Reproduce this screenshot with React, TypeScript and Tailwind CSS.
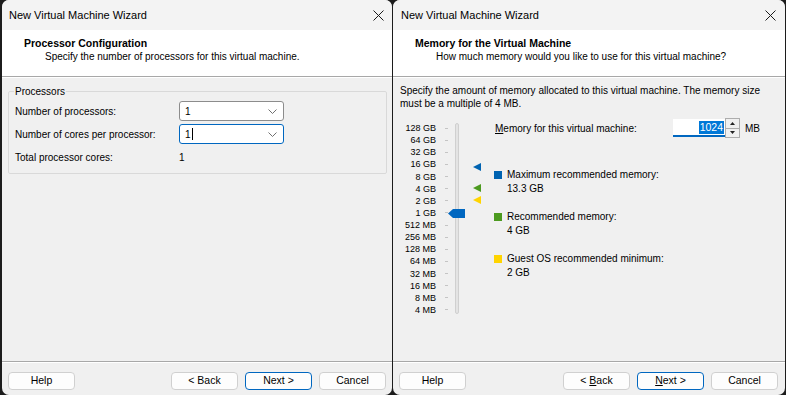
import React from "react";

const FONT = "font-['Liberation_Sans','Arial',sans-serif]";

function CloseX() {
  return (
    <svg width="11" height="11" viewBox="0 0 11 11">
      <path d="M0.5 0.5 L10.5 10.5 M10.5 0.5 L0.5 10.5" stroke="#1a1a1a" strokeWidth="1" fill="none" />
    </svg>
  );
}

function Chevron() {
  return (
    <svg width="9" height="5" viewBox="0 0 9 5">
      <path d="M0.5 0.5 L4.5 4.5 L8.5 0.5" stroke="#707070" strokeWidth="1" fill="none" />
    </svg>
  );
}

function Btn({ children, primary }: { children: React.ReactNode; primary?: boolean }) {
  return (
    <div
      className={
        "w-[67px] h-[18px] flex items-center justify-center rounded-[4px] bg-[#fdfdfd] text-[10.5px] text-black border " +
        (primary ? "border-[#0067c0]" : "border-[#d0d0d0]")
      }
    >
      {children}
    </div>
  );
}

function Separator() {
  return <div className="h-[2px] border-t border-[#a8a8a8] border-b border-b-white" />;
}

function Window({
  width,
  heading,
  sub,
  children,
  underline,
  titlePad,
  rightPad,
  closePad,
}: {
  width: string;
  heading: string;
  sub: string;
  children: React.ReactNode;
  underline?: boolean;
  titlePad: string;
  rightPad: string;
  closePad: string;
}) {
  return (
    <div className={"h-[395px] flex flex-col rounded-[7px] overflow-hidden bg-[#f0f0f0] " + width}>
      <div className={"h-[30px] shrink-0 flex items-center justify-between bg-[#f3f3f3] " + titlePad + " " + closePad}>
        <span className="text-[11px] text-black">New Virtual Machine Wizard</span>
        <CloseX />
      </div>
      <div className="h-[46px] shrink-0 bg-white pt-[6px] pl-[22px] leading-[14px]">
        <div className="text-[10.5px] font-bold text-black">{heading}</div>
        <div className="text-[10px] text-black pl-[21px]">{sub}</div>
      </div>
      <Separator />
      <div className="flex-1 flex flex-col">{children}</div>
      <Separator />
      <div className={"h-[32px] shrink-0 pt-[9px] pl-[6px] flex justify-between " + rightPad}>
        <Btn>Help</Btn>
        <div className="flex gap-[7px]">
          <Btn>
            {underline ? (
              <span>
                &lt; <span className="underline">B</span>ack
              </span>
            ) : (
              "< Back"
            )}
          </Btn>
          <Btn primary>
            {underline ? (
              <span>
                <span className="underline">N</span>ext &gt;
              </span>
            ) : (
              "Next >"
            )}
          </Btn>
          <Btn>Cancel</Btn>
        </div>
      </div>
    </div>
  );
}

function Combo({ focused }: { focused?: boolean }) {
  return (
    <div
      className={
        "w-[105px] h-[20px] bg-white rounded-[3px] border flex items-center justify-between pl-[5px] pr-[6px] " +
        (focused ? "border-[#0067c0]" : "border-[#8c8c8c]")
      }
    >
      <span className="flex items-center text-[10px] text-black">
        1{focused && <span className="ml-[1px] inline-block w-[1px] h-[12px] bg-black" />}
      </span>
      <Chevron />
    </div>
  );
}

const SIZES = [
  "128 GB",
  "64 GB",
  "32 GB",
  "16 GB",
  "8 GB",
  "4 GB",
  "2 GB",
  "1 GB",
  "512 MB",
  "256 MB",
  "128 MB",
  "64 MB",
  "32 MB",
  "16 MB",
  "8 MB",
  "4 MB",
];

function Marker({ color, top }: { color: string; top: string }) {
  return (
    <svg width="8" height="8" viewBox="0 0 8 8" className={"absolute left-[25px] " + top}>
      <path d="M0 4 L8 0 L8 8 Z" fill={color} />
    </svg>
  );
}

function Legend({ color, label, value, mt }: { color: string; label: string; value: string; mt: string }) {
  return (
    <div className={"flex items-start " + mt}>
      <div className={"w-[8px] h-[8px] mt-[3px] shrink-0 " + color} />
      <div className="ml-[5px] text-[10px] leading-[14px] text-black">
        <div>{label}</div>
        <div>{value}</div>
      </div>
    </div>
  );
}

export default function App() {
  return (
    <div className={"w-[786px] h-[395px] bg-[#1c1c1c] flex pl-[2px] gap-[1px] overflow-hidden " + FONT}>
      <Window
        width="w-[390px]"
        heading="Processor Configuration"
        sub="Specify the number of processors for this virtual machine."
        titlePad="pl-[7px]"
        closePad="pr-[8px]"
        rightPad="pr-[6px]"
      >
        <fieldset className="mt-[7px] ml-[6px] mr-[5px] border border-[#d9d9d9] rounded-[2px] px-[6px] pt-[3px] pb-[9px]">
          <legend className="text-[10px] leading-[13px] text-black px-[1px] -ml-[1px]">Processors</legend>
          <div className="flex items-center h-[20px]">
            <span className="w-[164px] text-[10px] text-black">Number of processors:</span>
            <Combo />
          </div>
          <div className="flex items-center h-[20px] mt-[3px]">
            <span className="w-[164px] text-[10px] text-black">Number of cores per processor:</span>
            <Combo focused />
          </div>
          <div className="flex items-center h-[14px] mt-[6px]">
            <span className="w-[164px] text-[10px] text-black">Total processor cores:</span>
            <span className="text-[10px] text-black">1</span>
          </div>
        </fieldset>
      </Window>
      <Window
        width="w-[392px]"
        heading="Memory for the Virtual Machine"
        sub="How much memory would you like to use for this virtual machine?"
        underline
        titlePad="pl-[8px]"
        closePad="pr-[9px]"
        rightPad="pr-[7px]"
      >
        <div className="pl-[7px] pt-[6px]">
          <div className="text-[10px] leading-[13px] text-black whitespace-nowrap">
            Specify the amount of memory allocated to this virtual machine. The memory size
            <br />
            must be a multiple of 4 MB.
          </div>
          <div className="flex items-start mt-[8px]">
            <div className="pt-[4px] flex flex-col">
              {SIZES.map((s) => (
                <div key={s} className="flex items-center h-[12.13px]">
                  <span className="w-[36px] text-right text-[9px] leading-[12px] text-black whitespace-nowrap">{s}</span>
                  <span className="ml-[9px] w-[3px] h-[1px] bg-[#c4c4c4]" />
                </div>
              ))}
            </div>
            <div className="relative w-[34px] h-[191px] mt-[5px]">
              <div className="absolute left-[7px] top-0 bottom-0 w-[4px] rounded-[2px] bg-[#e4e4e4] border border-[#d0d0d0]" />
              <svg width="17" height="9" viewBox="0 0 17 9" className="absolute left-0 top-[86px]">
                <path d="M0 4.5 L5 0 H17 V9 H5 Z" fill="#0067c0" />
              </svg>
              <Marker color="#0063b1" top="top-[40px]" />
              <Marker color="#4c9a1f" top="top-[61px]" />
              <Marker color="#ffd400" top="top-[73px]" />
            </div>
            <div className="ml-[12px] flex flex-col">
              <div className="flex items-center h-[20px]">
                <span className="w-[179px] pl-[1px] text-[10px] text-black">
                  <span className="underline">M</span>emory for this virtual machine:
                </span>
                <div className="w-[52px] h-[18px] bg-white border-b-2 border-[#0067c0] flex items-center justify-end pr-[1px]">
                  <span className="bg-[#0078d7] text-white text-[10.5px] leading-[13px] px-[1px]">1024</span>
                </div>
                <div className="w-[15px] h-[20px] border border-[#adadad] bg-[#f0f0f0] flex flex-col">
                  <div className="flex-1 flex items-center justify-center border-b border-[#adadad]">
                    <svg width="5" height="3" viewBox="0 0 5 3">
                      <path d="M0 3 L2.5 0 L5 3 Z" fill="#222" />
                    </svg>
                  </div>
                  <div className="flex-1 flex items-center justify-center">
                    <svg width="5" height="3" viewBox="0 0 5 3">
                      <path d="M0 0 L2.5 3 L5 0 Z" fill="#222" />
                    </svg>
                  </div>
                </div>
                <span className="ml-[5px] text-[10px] text-black">MB</span>
              </div>
              <Legend color="bg-[#0063b1]" label="Maximum recommended memory:" value="13.3 GB" mt="mt-[30px]" />
              <Legend color="bg-[#4c9a1f]" label="Recommended memory:" value="4 GB" mt="mt-[14px]" />
              <Legend color="bg-[#ffd400]" label="Guest OS recommended minimum:" value="2 GB" mt="mt-[14px]" />
            </div>
          </div>
        </div>
      </Window>
    </div>
  );
}
